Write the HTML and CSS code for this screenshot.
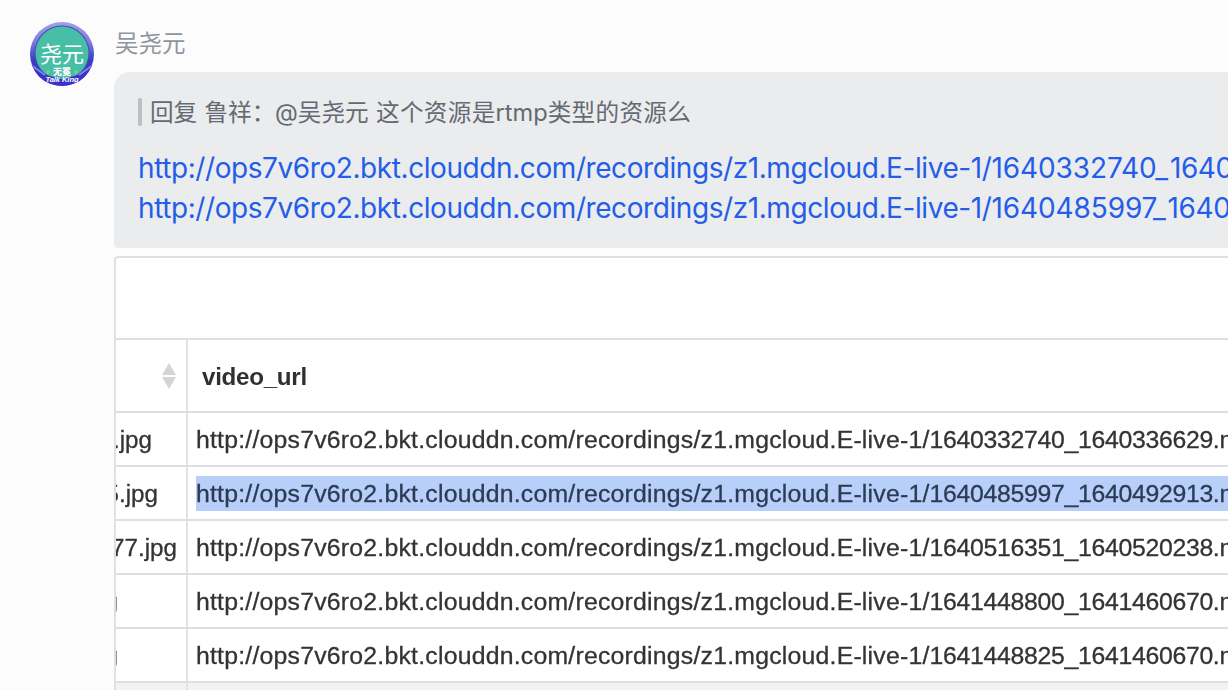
FILE: index.html
```html
<!DOCTYPE html>
<html lang="zh-CN">
<head>
<meta charset="utf-8">
<title>吴尧元</title>
<link rel="stylesheet" href="styles.css">
</head>
<body>
<main class="message">
  <svg class="avatar" viewBox="0 0 64 64">
    <defs>
      <linearGradient id="ring" x1="0" y1="0" x2="0" y2="1">
        <stop offset="0" stop-color="#a59ee8"/><stop offset=".3" stop-color="#7f7ce2"/><stop offset=".6" stop-color="#3a3cc0"/><stop offset="1" stop-color="#3b37cf"/>
      </linearGradient>
      <clipPath id="disc"><circle cx="32" cy="32" r="32"/></clipPath>
    </defs>
    <g clip-path="url(#disc)">
      <rect width="64" height="64" fill="url(#ring)"/>
      <circle cx="32" cy="31" r="27.5" fill="#3a52b4"/>
      <circle cx="32" cy="31" r="26.5" fill="#49bea6"/>
      <path d="M0 41 16 53 32 57 48 53 64 41V64H0Z" fill="#3834c8"/>
      <path d="M1 43 15 53M63 43 49 53" fill="none" stroke="#8482e4" stroke-width="2"/>
      <path d="M18 48v4m-2-2h4M46 48v4m-2-2h4" stroke="#8cd66b" stroke-width="1"/>
      <text class="avatar-name" x="32" y="39.5">尧元</text>
      <text class="avatar-badge" x="32" y="53">无冕</text>
      <text class="avatar-brand" x="32" y="60" textLength="33">Talk King</text>
    </g>
  </svg>
  <div class="content">
    <div class="sender">吴尧元</div>
    <section class="bubble">
      <div class="quote"><span class="quote-bar"></span><span class="quote-text"><span class="quote-who">回复 鲁祥：</span><span class="quote-at">@吴尧元</span><span class="quote-body">这个资源是<span class="latin">rtmp</span>类型的资源么</span></span></div>
      <div class="link">http://ops7v6ro2.bkt.clouddn.com/recordings/z1.mgcloud.E-live-1/<span class="id">1640332740_</span>1640336629.mp4</div>
      <div class="link">http://ops7v6ro2.bkt.clouddn.com/recordings/z1.mgcloud.E-live-1/<span class="id">1640485997_</span>1640492913.mp4</div>
    </section>
    <section class="picture">
      <div class="table">
        <div class="row head"><div class="thumb"><svg class="sort" viewBox="0 0 14 26"><path d="M7 0 14 12H0ZM0 14H14L7 26Z" fill="#d5d5d5"/></svg></div><div class="url">video_url</div></div>
        <div class="row"><div class="thumb end-a">.jpg</div><div class="url"><span><span class="base">http://ops7v6ro2.bkt.clouddn.com/recordings/z1.mgcloud.E-live-1/</span>1640332740_1640336629.mp4</span></div></div>
        <div class="row"><div class="thumb end-b">5.jpg</div><div class="url"><span class="selected"><span class="base">http://ops7v6ro2.bkt.clouddn.com/recordings/z1.mgcloud.E-live-1/</span>1640485997_1640492913.mp4</span></div></div>
        <div class="row"><div class="thumb end-c">77.jpg</div><div class="url"><span><span class="base">http://ops7v6ro2.bkt.clouddn.com/recordings/z1.mgcloud.E-live-1/</span>1640516351_1640520238.mp4</span></div></div>
        <div class="row"><div class="thumb end-d">g</div><div class="url"><span><span class="base">http://ops7v6ro2.bkt.clouddn.com/recordings/z1.mgcloud.E-live-1/</span>1641448800_1641460670.mp4</span></div></div>
        <div class="row"><div class="thumb end-d">g</div><div class="url"><span><span class="base">http://ops7v6ro2.bkt.clouddn.com/recordings/z1.mgcloud.E-live-1/</span>1641448825_1641460670.mp4</span></div></div>
        <div class="row foot"><div class="thumb"></div><div class="url"></div></div>
      </div>
    </section>
  </div>
</main>
</body>
</html>
```
FILE: styles.css
```css
* { box-sizing: border-box; }
body { margin: 0; height: 690px; overflow: hidden; background: #fcfcfc; font-family: Inter, "Noto Sans CJK SC", sans-serif; }
.message { display: flex; gap: 20px; height: 690px; padding: 22px 0 0 30px; overflow: hidden; }
.avatar { width: 64px; height: 64px; flex: none; }
.avatar-name { font: 22px "Noto Sans CJK SC", sans-serif; fill: #fff; text-anchor: middle; }
.avatar-badge { font: 900 9px "Noto Sans CJK SC", sans-serif; fill: #fff; text-anchor: middle; }
.avatar-brand { font: italic bold 7.5px "Liberation Sans", sans-serif; fill: #fff; text-anchor: middle; }
.content { flex: 1; min-width: 0; }
.sender { height: 50px; padding-left: 1px; line-height: 40px; font-size: 23.5px; color: #8f959e; font-family: "Noto Sans CJK SC", sans-serif; }
.bubble { height: 176px; padding: 20px 0 0 24px; border-radius: 16px 0 0 4px; background: #ebeced; overflow: hidden; white-space: nowrap; }
.quote { display: flex; align-items: center; gap: 8px; height: 40px; margin-bottom: 16px; color: #646a73; font: 23.6px/40px "Noto Sans CJK SC", sans-serif; }
.quote-bar { width: 4px; height: 28px; border-radius: 2px; background: #bbbfc4; }
.quote-text { display: flex; align-items: baseline; }
.quote-who { width: 125px; word-spacing: 2px; }
.quote-at { width: 101px; font-family: Inter, "Noto Sans CJK SC", sans-serif; }
.quote-body { letter-spacing: .32px; }
.latin { font-family: Inter, sans-serif; letter-spacing: 0; }
.link { height: 40px; line-height: 41px; font-size: 28px; letter-spacing: -.42px; color: #245de8; }
.id { letter-spacing: -.1px; padding-right: 2px; }
.picture { height: 480px; margin-top: 8px; padding-top: 80px; border: 2px solid #dee0e3; border-right: 0; border-radius: 4px 0 0 0; background: #fff; overflow: hidden; }
.table { filter: blur(.6px); font: 24.8px/53px "Liberation Sans", sans-serif; letter-spacing: -.3px; color: #333; -webkit-text-stroke: .3px; }
.row { display: flex; height: 54px; border-top: 2px solid #dedfe0; white-space: nowrap; }
.head { height: 73px; line-height: 73px; font-size: 24.2px; font-weight: bold; color: #303030; -webkit-text-stroke: 0; }
.thumb { display: flex; justify-content: flex-end; width: 72px; flex: none; border-right: 2px solid #e1e2e3; overflow: hidden; font-size: 24.2px; letter-spacing: 0; }
.head .thumb { align-items: center; padding-right: 10px; }
.sort { width: 14px; height: 26px; }
.url { flex: 1; min-width: 0; padding-left: 8px; overflow: hidden; }
.head .url { padding-left: 14px; }
.base { letter-spacing: .22px; }
.end-a { padding-right: 34px; }
.end-b { padding-right: 28px; }
.end-c { padding-right: 9px; }
.end-d { padding-right: 68px; }
.selected { display: inline-block; height: 35px; margin-top: 9px; line-height: 35px; vertical-align: top; background: #b7cff9; color: #2c3b55; }
.foot { background: #f2f2f2; }
```
